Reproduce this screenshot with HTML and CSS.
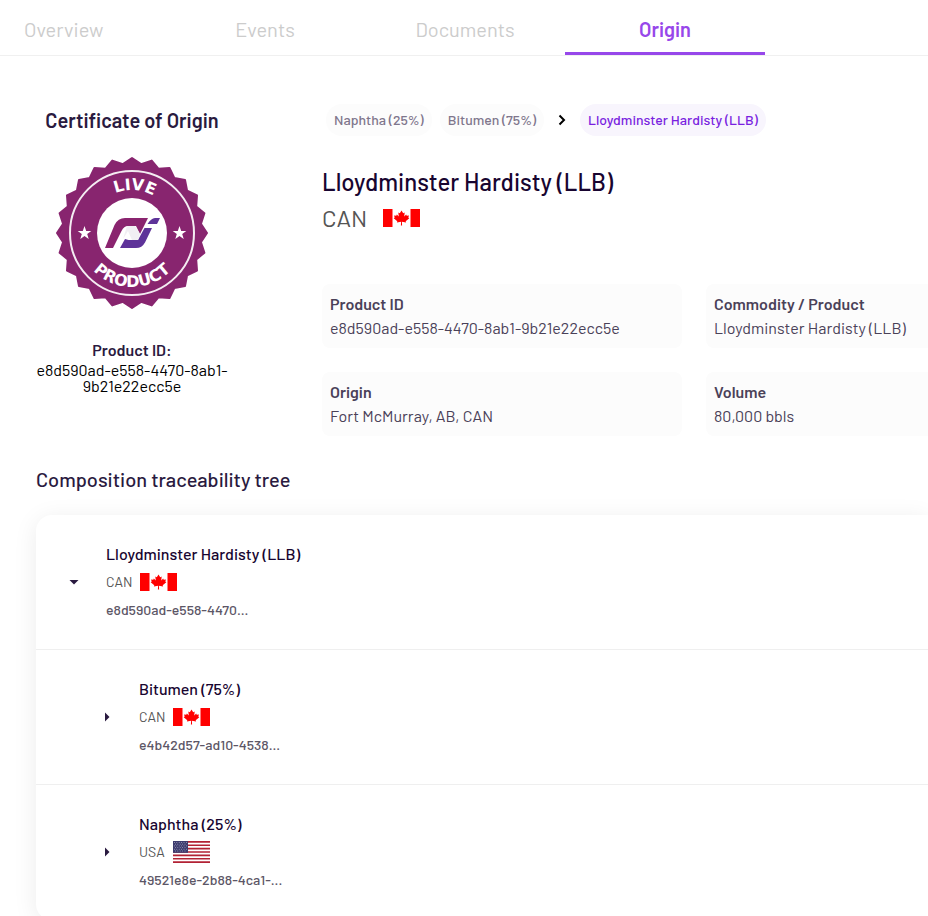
FILE: index.html
```html
<!DOCTYPE html>
<html lang="en">
<head>
<meta charset="utf-8">
<meta name="viewport" content="width=device-width, initial-scale=1">
<title>Certificate of Origin</title>
<link rel="stylesheet" href="styles.css">
</head>
<body>
<svg class="defs" aria-hidden="true">
  <symbol id="flag-can" viewBox="0 0 37 18">
    <path fill="#fff" d="M0 0h37v18H0z"/>
    <path fill="#f00" d="M0 0h9.500v18H0zM27.500 0H37v18h-9.500z"/>
    <path fill="#f00" d="M18.500 1.500l1.700 2.700 1.500-.7-.5 4 2-2 .5 1.200 2.300-.3-.7 2.200 1 .600-3.600 3 .4 1.200-4.200-.6.200 3.600h-1.200l.2-3.600-4.200.6.400-1.200-3.600-3 1-.6-.7-2.200 2.300.3.500-1.200 2 2-.5-4 1.500.7z"/>
  </symbol>
  <symbol id="flag-usa" viewBox="0 0 37 22">
    <path fill="#fff" d="M0 0h37v22H0z"/>
    <path stroke="#b22234" stroke-width="1.700" d="M0 .85h37M0 4.230h37M0 7.610h37M0 11h37M0 14.380h37M0 17.770h37M0 21.150h37"/>
    <path fill="#3c3b6e" d="M0 0h15v11.800H0z"/>
    <path stroke="#b9b8d0" stroke-width=".8" stroke-dasharray=".8 1.600" d="M1 1.500h13M2 3.200h12M1 4.900h13M2 6.600h12M1 8.300h13M2 10h12"/>
  </symbol>
</svg>

<nav class="tabs">
  <a class="tab" href="#overview">Overview</a>
  <a class="tab" href="#events">Events</a>
  <a class="tab" href="#documents">Documents</a>
  <a class="tab tab-active" href="#origin" aria-current="page">Origin</a>
</nav>

<main class="page">
  <div class="summary">
    <section class="certificate">
      <h2 class="heading">Certificate of Origin</h2>
      <svg class="seal" viewBox="-77 -77 154 154" role="img" aria-label="Live product seal">
        <defs>
          <path id="arc-top" d="M-43 0A43 43 0 0 1 43 0"/>
          <path id="arc-bottom" d="M-54 0A54 54 0 0 0 54 0"/>
          <path id="star" d="M0-7l1.700 4.900h5.100L2.700 1l1.500 5L0 3l-4.200 3 1.500-5-4.100-3.100h5.100z"/>
        </defs>
        <path class="seal-body" d="M0-75L9.100-68.900 19.700-72.400 26.600-64.200 37.500-65 42.300-55.100 53-53 55.100-42.300 65-37.500 64.200-26.600 72.400-19.700 68.900-9.100 75 0 68.900 9.100 72.400 19.700 64.200 26.600 65 37.500 55.100 42.300 53 53 42.300 55.100 37.500 65 26.600 64.200 19.700 72.400 9.100 68.900 0 75-9.100 68.900-19.700 72.400-26.600 64.200-37.500 65-42.300 55.100-53 53-55.100 42.300-65 37.500-64.200 26.600-72.400 19.700-68.900 9.100-75 0-68.900-9.100-72.400-19.700-64.200-26.600-65-37.500-55.100-42.300-53-53-42.300-55.100-37.500-65-26.600-64.200-19.700-72.400-9.100-68.900z"/>
        <circle class="seal-ring" r="62"/>
        <circle fill="#fff" r="35"/>
        <text class="seal-text"><textPath href="#arc-top" startOffset="52%">LIVE</textPath></text>
        <text class="seal-text"><textPath href="#arc-bottom" startOffset="50%">PRODUCT</textPath></text>
        <use href="#star" x="-47.500" fill="#fff"/>
        <use href="#star" x="47.500" fill="#fff"/>
        <path fill="#8a246f" d="M-27 15h8l8.500-17Q-8-7-4-7H4L8 1l8-16H-7Q-14-15-17.500-8z"/>
        <path fill="#5e3399" d="M-12 15l5-9 3.500 1H6L12.500-5H20l-7 14.500Q10 15 4 15zM15.500-9Q19-14.500 23-15h5l-3 6z"/>
        <path fill="#f1eff3" d="M-5-7h8l5 8-2 6H0l-4-9-5 8z"/>
      </svg>
      <p class="product-label">Product ID:</p>
      <p class="product-id">e8d590ad-e558-4470-8ab1-9b21e22ecc5e</p>
    </section>

    <section class="product">
      <div class="chips">
        <a class="chip" href="#naphtha">Naphtha (25%)</a>
        <a class="chip" href="#bitumen">Bitumen (75%)</a>
        <svg class="chevron" viewBox="0 0 8 12" aria-hidden="true"><path d="M1.500 1.500L6 6l-4.500 4.500"/></svg>
        <a class="chip chip-active" href="#llb">Lloydminster Hardisty (LLB)</a>
      </div>
      <h1 class="title">Lloydminster Hardisty (LLB)</h1>
      <p class="country">CAN <svg class="flag" role="img" aria-label="Canada"><use href="#flag-can"/></svg></p>
      <dl class="facts">
        <div class="fact"><dt>Product ID</dt><dd>e8d590ad-e558-4470-8ab1-9b21e22ecc5e</dd></div>
        <div class="fact"><dt>Commodity / Product</dt><dd>Lloydminster Hardisty (LLB)</dd></div>
        <div class="fact"><dt>Origin</dt><dd>Fort McMurray, AB, CAN</dd></div>
        <div class="fact"><dt>Volume</dt><dd>80,000 bbls</dd></div>
      </dl>
    </section>
  </div>

  <section class="tree">
    <h2 class="heading">Composition traceability tree</h2>
    <ul class="tree-card">
      <li class="node">
        <button class="toggle" type="button" aria-expanded="true" aria-label="Collapse Lloydminster Hardisty (LLB)"><svg class="caret" viewBox="0 0 10 10"><path d="M.5 3h9L5 7.500z"/></svg></button>
        <div class="node-body">
          <h3 class="node-title">Lloydminster Hardisty (LLB)</h3>
          <p class="node-country">CAN <svg class="flag" role="img" aria-label="Canada"><use href="#flag-can"/></svg></p>
          <p class="node-id">e8d590ad-e558-4470...</p>
        </div>
      </li>
      <li class="node node-child">
        <button class="toggle" type="button" aria-expanded="false" aria-label="Expand Bitumen (75%)"><svg class="caret" viewBox="0 0 10 10"><path d="M3 .5v9L7.500 5z"/></svg></button>
        <div class="node-body">
          <h3 class="node-title">Bitumen (75%)</h3>
          <p class="node-country">CAN <svg class="flag" role="img" aria-label="Canada"><use href="#flag-can"/></svg></p>
          <p class="node-id">e4b42d57-ad10-4538...</p>
        </div>
      </li>
      <li class="node node-child">
        <button class="toggle" type="button" aria-expanded="false" aria-label="Expand Naphtha (25%)"><svg class="caret" viewBox="0 0 10 10"><path d="M3 .5v9L7.500 5z"/></svg></button>
        <div class="node-body">
          <h3 class="node-title">Naphtha (25%)</h3>
          <p class="node-country">USA <svg class="flag flag-tall" role="img" aria-label="United States"><use href="#flag-usa"/></svg></p>
          <p class="node-id">49521e8e-2b88-4ca1-...</p>
        </div>
      </li>
    </ul>
  </section>
</main>
</body>
</html>
```

FILE: styles.css
```css
* {
  box-sizing: border-box;
}

body {
  margin: 0;
  background: #fff;
  color: #2a1a40;
  font-family: Barlow, Roboto, sans-serif;
  font-size: 16px;
  line-height: 24px;
}

h1, h2, h3, p, dl, dd, ul {
  margin: 0;
  padding: 0;
}

a {
  text-decoration: none;
}

.defs {
  display: none;
}

.tabs {
  display: flex;
  height: 56px;
  border-bottom: 1px solid #f0f0f0;
}

.tab {
  display: flex;
  align-items: center;
  justify-content: center;
  width: 200px;
  padding-top: 6px;
  border-bottom: 3px solid transparent;
  border-radius: 3px 3px 0 0;
  color: #ccc;
  font-size: 20px;
  font-weight: 400;
}

.tab:first-child {
  justify-content: flex-start;
  width: 165px;
  padding-left: 24px;
}

.tab-active {
  border-bottom-color: #9747ea;
  color: #9747ea;
  font-weight: 600;
}

.page {
  padding: 48px 0 0 36px;
}

.summary {
  display: grid;
  grid-template-columns: 192px minmax(0, 1fr);
  column-gap: 94px;
}

.heading {
  font-size: 20px;
  font-weight: 500;
  line-height: 32px;
}

.certificate {
  display: flex;
  flex-direction: column;
  align-items: center;
  text-align: center;
}

.certificate .heading {
  font-weight: 600;
  white-space: nowrap;
}

.seal {
  width: 154px;
  height: 154px;
  margin: 20px 0 28px;
}

.seal-body {
  fill: #88256f;
  stroke: #88256f;
  stroke-width: 2;
  stroke-linejoin: round;
}

.seal-ring {
  fill: none;
  stroke: #f4ecf2;
  stroke-width: 2;
}

.seal-text {
  fill: #fff;
  font-family: "DejaVu Sans", sans-serif;
  font-size: 16px;
  font-weight: 700;
  text-anchor: middle;
}

.product-label {
  font-weight: 600;
}

.product-id {
  color: #000;
  line-height: 16px;
}

.chips {
  display: flex;
  align-items: center;
  gap: 8px;
  padding-left: 4px;
}

.chip {
  padding: 0 8px;
  border-radius: 16px;
  background: #fcfcfc;
  color: #7f768c;
  font-size: 14px;
  font-weight: 500;
  line-height: 32px;
}

.chip-active {
  background: #f8f5fd;
  color: #7a1fe0;
}

.chevron {
  width: 8px;
  height: 12px;
  margin: 0 6px;
  fill: none;
  stroke: #000;
  stroke-width: 2;
}

.title {
  margin-top: 28px;
  color: #180530;
  font-size: 24px;
  font-weight: 500;
  line-height: 36px;
}

.country {
  display: flex;
  align-items: center;
  gap: 16px;
  color: #555;
  font-size: 24px;
  line-height: 36px;
}

.flag {
  width: 37px;
  height: 18px;
}

.flag-tall {
  height: 22px;
}

.facts {
  display: grid;
  grid-template-columns: 360px minmax(0, 1fr);
  gap: 24px;
  margin-top: 48px;
}

.fact {
  padding: 8px;
  border-radius: 8px;
  background: #fcfcfc;
  color: #4a4158;
}

.fact:nth-child(even) {
  border-radius: 8px 0 0 8px;
}

.fact dt {
  font-weight: 600;
}

.tree {
  margin-top: 27px;
}

.tree-card {
  margin-top: 20px;
  border-radius: 16px 0 0 16px;
  box-shadow: 0 4px 24px rgba(0, 0, 0, 0.08);
  list-style: none;
}

.node {
  display: flex;
  align-items: center;
  gap: 20px;
  height: 135px;
  padding-left: 26px;
  border-bottom: 1px solid #efefef;
}

.node-child {
  padding-left: 59px;
}

.toggle {
  display: flex;
  align-items: center;
  justify-content: center;
  width: 24px;
  height: 24px;
  padding: 0;
  border: 0;
  background: none;
}

.caret {
  width: 10px;
  height: 10px;
  fill: #2a1a40;
}

.node-title {
  color: #180530;
  font-size: 16px;
  font-weight: 500;
  line-height: 28px;
}

.node-country {
  display: flex;
  align-items: center;
  gap: 8px;
  color: #555;
  font-size: 14px;
  line-height: 28px;
}

.node-id {
  color: #5c5666;
  font-size: 14px;
  font-weight: 500;
  line-height: 28px;
}
```
